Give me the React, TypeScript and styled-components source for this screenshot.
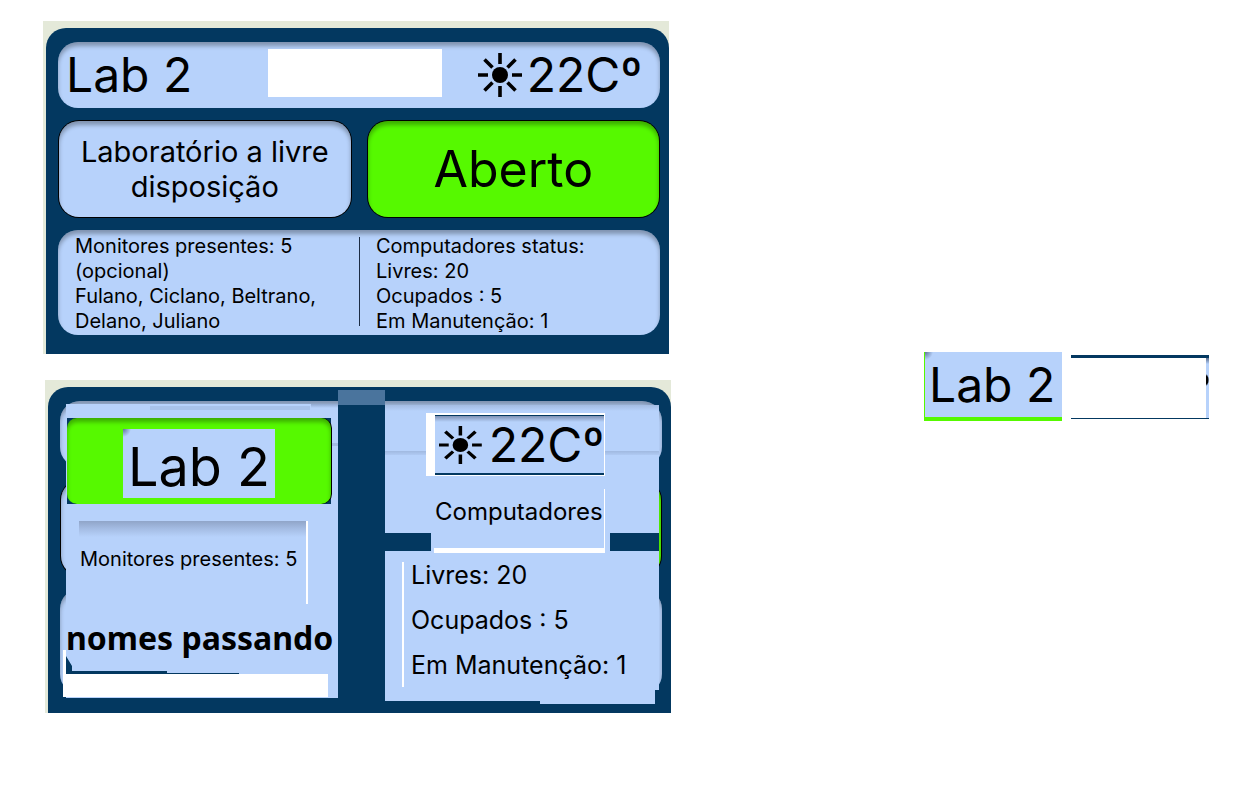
import React from "react";
import styled, { createGlobalStyle } from "styled-components";

const navy = "#033860";
const sky = "#b7d2fb";
const lime = "#56f900";
const sage = "#e4e9d9";

const GlobalStyle = createGlobalStyle`
  *, *::before, *::after { box-sizing: border-box; }
  body {
    margin: 0;
    background: #fff;
    color: #000;
    font-family: Inter, "Liberation Sans", sans-serif;
  }
  h1, h2, p, ul { margin: 0; padding: 0; font-weight: 400; list-style: none; }
`;

const Page = styled.main`
  display: grid;
  grid-template-columns: 628fr 285fr;
  column-gap: 253px;
  align-items: start;
  padding: 21px 43px;
`;

const Boards = styled.div`
  display: flex;
  flex-direction: column;
  gap: 26px;
`;

const Board = styled.section<{ $shifted?: boolean }>`
  margin: ${(p) => (p.$shifted ? "0 0 0 2px" : "0 2px 0 0")};
  padding: 7px 0 0 3px;
  background: ${sage};
  overflow: hidden;
`;

const Surface = styled.div`
  display: grid;
  background: ${navy};
  border-radius: 20px 20px 0 0;
`;

const Stack = styled.div`
  grid-area: 1 / 1;
  display: flex;
  flex-direction: column;
  gap: 12px;
  padding: 14px 9px 19px 12px;
  min-width: 0;
`;

const Panel = styled.div<{ $height: number; $fill?: string; $outlined?: boolean }>`
  display: flex;
  align-items: center;
  min-height: ${(p) => p.$height}px;
  border-radius: 20px;
  background: ${(p) => p.$fill ?? sky};
  box-shadow: inset 0 4px 4px rgba(0, 0, 0, 0.3)${(p) => (p.$outlined ? ", 0 0 0 1px #000" : "")};
`;

const HeaderPanel = styled(Panel)`
  justify-content: space-between;
  padding: 0 18px 0 8px;
`;

const StatePanel = styled(Panel)`
  justify-content: center;
  text-align: center;
`;

const StateRow = styled.div`
  display: grid;
  grid-template-columns: 1fr 1fr;
  gap: 17px;
  padding: 1px;
`;

const Title = styled.h1<{ $large?: boolean }>`
  font-size: ${(p) => (p.$large ? 50 : 48)}px;
  line-height: 58px;
  white-space: nowrap;
`;

const Notice = styled.p`
  font-size: 29px;
  line-height: 35px;
`;

const Blank = styled.div`
  width: 174px;
  height: 48px;
  margin: 0 0 4px 40px;
  background: #fff;
`;

const Weather = styled.div`
  display: flex;
  align-items: center;
  gap: 5px;
  font-size: 48px;
  line-height: 58px;
  white-space: nowrap;
`;

const DetailPanel = styled(Panel)`
  display: grid;
  grid-template-columns: 284fr 1px 300fr;
  align-items: stretch;
  padding: 4px 0 1px 17px;
  font-size: 20px;
  line-height: 25px;
`;

const Monitors = styled.div`
  min-width: 0;
  padding-right: 24px;
`;

const Computers = styled.div`
  min-width: 0;
  padding-left: 16px;
`;

const Divider = styled.div`
  margin: 3px 0 8px;
  background: #1c2c44;
`;

const Collage = styled.div`
  grid-area: 1 / 1;
  z-index: 1;
  display: grid;
  grid-template-columns: 272fr 47fr 274fr;
  padding: 0 12px 0 18px;
  min-width: 0;
`;

const LeftSheet = styled.div`
  display: flex;
  flex-direction: column;
  min-width: 0;
  margin: 17px 0 15px;
  padding-top: 14px;
  background:
    linear-gradient(#a9c3ea, #a9c3ea) 84px 2px / 160px 4px no-repeat,
    linear-gradient(#90a9cf, ${sky}) 100% 0 / 27px 4px no-repeat,
    linear-gradient(#a3bce3, #a3bce3) 100% 39px / 8px 3px no-repeat,
    ${sky};
`;

const GreenFrame = styled.div`
  margin: 0 7px 0 1px;
  background: ${navy};
`;

const GreenPlate = styled.div`
  display: flex;
  justify-content: center;
  padding: 11px 0 6px;
  border-radius: 10px;
  background: ${lime};
  box-shadow: inset 0 4px 4px rgba(0, 0, 0, 0.3), 1px 0 0 #000;
`;

const NameTag = styled.div<{ $small?: boolean }>`
  height: ${(p) => (p.$small ? 65 : 69)}px;
  padding: 0 ${(p) => (p.$small ? 4 : 5)}px;
  background: radial-gradient(circle at 0 0, #5f7398 0, ${sky} 8px);
  font-size: ${(p) => (p.$small ? 48 : 54)}px;
  line-height: ${(p) => (p.$small ? 65 : 75)}px;
  white-space: nowrap;
`;

const MonitorCount = styled.h2`
  width: 229px;
  height: 83px;
  margin: 17px 0 0 13px;
  padding: 0 0 0 1px;
  border-right: 2px solid #fff;
  background: linear-gradient(#90a5c8, #a5bde4 8px, ${sky} 16px);
  font-size: 20px;
  line-height: 77px;
  white-space: nowrap;
`;

const Ticker = styled.p`
  height: 67px;
  font-family: "Noto Sans", "Open Sans", sans-serif;
  font-size: 32px;
  font-weight: 700;
  line-height: 67px;
  white-space: nowrap;
`;

const ErasedFoot = styled.div`
  position: relative;
  height: 23px;
  margin: auto 10px 1px -3px;
  background: #fff;

  &::before {
    content: "";
    position: absolute;
    left: 0;
    bottom: 100%;
    width: 3px;
    height: 24px;
    background: #fff;
  }

  &::after {
    content: "";
    position: absolute;
    left: 3px;
    bottom: 100%;
    width: 173px;
    height: 18px;
    background: ${navy};
    clip-path: polygon(0 0, 6px 10px, 6px 15px, 101px 15px, 101px 17px, 100% 17px, 100% 100%, 0 100%);
  }
`;

const Spine = styled.div`
  margin-top: 3px;
  border-top: 15px solid #4a749d;
  background: ${navy};
`;

const RightSheet = styled.div`
  display: flex;
  flex-direction: column;
  min-width: 0;
  margin: 18px 0 9px;
`;

const UpperSheet = styled.div`
  height: 146px;
  padding: 8px 0 0 41px;
  background:
    linear-gradient(#a4bce2, ${sky}) 0 0 / 100% 6px no-repeat,
    linear-gradient(#a0b9e0, #b0caf3) 0 46px / 100% 4px no-repeat,
    linear-gradient(${sky} 128px, ${navy} 128px);
`;

const WeatherFrame = styled.div`
  width: 179px;
  height: 63px;
  padding: 2px 1px 1px 9px;
  background: #fff;
`;

const WeatherStrip = styled(Weather)`
  height: 60px;
  padding-left: 4px;
  gap: 7px;
  overflow: hidden;
  border-top: 1px solid ${navy};
  border-bottom: 2px solid ${navy};
  background: linear-gradient(#7f92b4, ${sky} 6px);
`;

const ComputersTitle = styled.h2`
  position: relative;
  width: 179px;
  height: 77px;
  margin-left: 5px;
  padding-left: 4px;
  background: ${sky};
  font-size: 24px;
  line-height: 72px;
  white-space: nowrap;

  &::after {
    content: "";
    position: absolute;
    inset: 13px 5px 0 3px;
    border: solid #fff;
    border-width: 0 1px 5px 0;
  }
`;

const LowerSheet = styled.div`
  display: flex;
  flex: 1;
  padding: 2px 0 14px 17px;
  background:
    linear-gradient(${navy}, ${navy}) 0 100% / 155px 3px no-repeat,
    linear-gradient(${navy}, ${navy}) 100% 100% / 4px 14px no-repeat,
    ${sky};
`;

const WhiteRule = styled.div`
  width: 2px;
  margin: 9px 7px 3px 0;
  background: #fff;
`;

const StatusList = styled.ul`
  font-size: 25px;
  line-height: 45px;
  white-space: nowrap;
`;

const Scraps = styled.aside`
  display: grid;
  grid-template-columns: minmax(0, 1fr) minmax(0, 1fr);
  gap: 9px;
  align-items: start;
  margin-top: 331px;
`;

const TagScrap = styled.div`
  border: solid ${lime};
  border-width: 0 0 4px 1px;
`;

const EmptyScrap = styled.div`
  display: flex;
  justify-content: flex-end;
  height: 64px;
  margin-top: 3px;
  border: solid ${navy};
  border-width: 3px 0 1px;
`;

const Sliver = styled.div`
  width: 3px;
  background:
    radial-gradient(ellipse at 0 50%, #000 0 2px, transparent 3px) 0 16px / 3px 12px no-repeat,
    linear-gradient(#596d8d, ${sky} 6px);
`;

function Sun({ height }: { height: number }) {
  return (
    <svg width="44" height={height} viewBox="0 0 44 44" preserveAspectRatio="none" aria-hidden="true">
      <circle cx="22" cy="22" r="8" />
      <path
        d="M22 0v11M22 33v11M0 22h10M34 22h10M6.5 6.5l8 8M29.5 29.5l8 8M37.500 6.500l-8 8M14.500 29.500l-8 8"
        fill="none"
        stroke="#000"
        strokeWidth="3.6"
      />
    </svg>
  );
}

export default function App() {
  return (
    <>
      <GlobalStyle />
      <Page>
        <Boards>
          <Board>
            <Surface>
              <Stack>
                <HeaderPanel $height={66}>
                  <Title>Lab 2</Title>
                  <Blank />
                  <Weather>
                    <Sun height={44} />
                    <span>22Cº</span>
                  </Weather>
                </HeaderPanel>
                <StateRow>
                  <StatePanel $height={96} $outlined>
                    <Notice>
                      Laboratório a livre
                      <br />
                      disposição
                    </Notice>
                  </StatePanel>
                  <StatePanel $height={96} $fill={lime} $outlined>
                    <Title as="p" $large>
                      Aberto
                    </Title>
                  </StatePanel>
                </StateRow>
                <DetailPanel $height={105}>
                  <Monitors>
                    <p>Monitores presentes: 5</p>
                    <p>(opcional)</p>
                    <p>Fulano, Ciclano, Beltrano, Delano, Juliano</p>
                  </Monitors>
                  <Divider />
                  <Computers>
                    <p>Computadores status:</p>
                    <ul>
                      <li>Livres: 20</li>
                      <li>Ocupados : 5</li>
                      <li>Em Manutenção: 1</li>
                    </ul>
                  </Computers>
                </DetailPanel>
              </Stack>
            </Surface>
          </Board>

          <Board $shifted>
            <Surface>
              <Stack aria-hidden="true">
                <Panel $height={66} />
                <StateRow>
                  <Panel $height={96} $outlined />
                  <Panel $height={96} $fill={lime} $outlined />
                </StateRow>
                <Panel $height={105} />
              </Stack>
              <Collage>
                <LeftSheet>
                  <GreenFrame>
                    <GreenPlate>
                      <NameTag>Lab 2</NameTag>
                    </GreenPlate>
                  </GreenFrame>
                  <MonitorCount>Monitores presentes: 5</MonitorCount>
                  <Ticker>nomes passando</Ticker>
                  <ErasedFoot />
                </LeftSheet>
                <Spine />
                <RightSheet>
                  <UpperSheet>
                    <WeatherFrame>
                      <WeatherStrip>
                        <Sun height={38} />
                        <span>22Cº</span>
                      </WeatherStrip>
                    </WeatherFrame>
                    <ComputersTitle>Computadores</ComputersTitle>
                  </UpperSheet>
                  <LowerSheet>
                    <WhiteRule />
                    <StatusList>
                      <li>Livres: 20</li>
                      <li>Ocupados : 5</li>
                      <li>Em Manutenção: 1</li>
                    </StatusList>
                  </LowerSheet>
                </RightSheet>
              </Collage>
            </Surface>
          </Board>
        </Boards>

        <Scraps>
          <TagScrap>
            <NameTag $small>Lab 2</NameTag>
          </TagScrap>
          <EmptyScrap>
            <Sliver />
          </EmptyScrap>
        </Scraps>
      </Page>
    </>
  );
}
